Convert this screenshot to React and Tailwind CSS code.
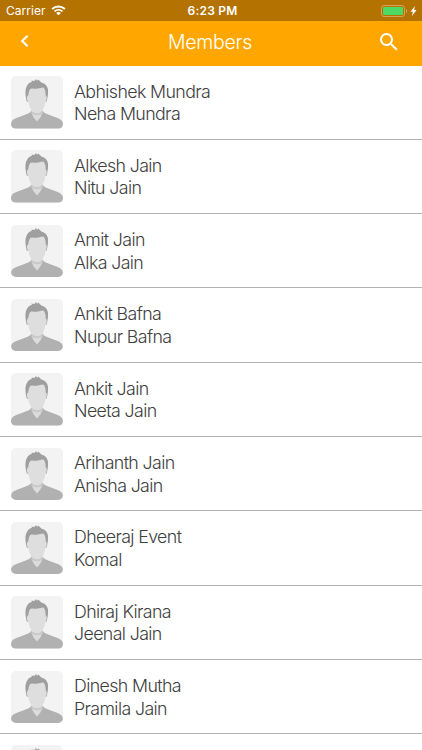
import { MdSearch } from "react-icons/md";

const members = [
  { name: "Abhishek Mundra", spouse: "Neha Mundra" },
  { name: "Alkesh Jain", spouse: "Nitu Jain" },
  { name: "Amit Jain", spouse: "Alka Jain" },
  { name: "Ankit Bafna", spouse: "Nupur Bafna" },
  { name: "Ankit Jain", spouse: "Neeta Jain" },
  { name: "Arihanth Jain", spouse: "Anisha Jain" },
  { name: "Dheeraj Event", spouse: "Komal" },
  { name: "Dhiraj Kirana", spouse: "Jeenal Jain" },
  { name: "Dinesh Mutha", spouse: "Pramila Jain" },
  { name: "", spouse: "" },
];

const Avatar = () => (
  <svg
    viewBox="0 0 156 157"
    className="h-[52.5px] w-[52px] shrink-0 rounded-[5px] bg-[#f3f3f3]"
  >
    <path
      d="M0 157V143C1 134 7 129 16 126L44 115C52 112 58 109 62 103H94C98 109 104 112 112 115L140 126C149 130 155 135 156 143V157Z"
      fill="#b1b1b1"
    />
    <path d="M62 94H94V112L88 124L78 136L68 124L62 112Z" fill="#dcdcdc" />
    <path d="M62 104C68 114 88 114 94 104V112C88 119 68 119 62 112Z" fill="#cacaca" />
    <path
      d="M47 76C43 58 42 46 45 36C48 25 55 19 63 17L61 13L70 15L75 9L78 14L82 10L91 19C103 22 109 29 111 40C112 52 110 64 107 76Z"
      fill="#9f9f9f"
    />
    <path
      d="M53 51C54 42 58 36 64 37C76 41 86 34 97 34C103 39 104 48 104 58C109 60 108 73 103 76C102 96 92 110 78 110C64 110 54 96 52 76C47 73 46 60 51 59Z"
      fill="#dedede"
    />
  </svg>
);

const StatusBar = () => (
  <div className="flex h-[21px] items-center bg-[#b47200] pr-[5px] pl-[6px] text-white">
    <div className="flex flex-1 items-center gap-[5px] text-[12px] tracking-[0.05px]">
      Carrier
      <svg viewBox="0 0 16 12" className="h-[11px] w-[15px]" fill="none" stroke="currentColor">
        <path d="M1 4.3C5 0.8 11 0.8 15 4.3" strokeWidth="2.1" />
        <path d="M3.6 7C6.1 4.7 9.9 4.7 12.4 7" strokeWidth="2" />
        <path d="M5.4 8.7Q8 6.5 10.6 8.7L8 11.3Z" fill="currentColor" stroke="none" />
      </svg>
    </div>
    <div className="pl-[2px] text-[12px] font-semibold tracking-[0.2px]">6:23 PM</div>
    <div className="flex flex-1 items-center justify-end">
      <div className="h-[12px] w-[24px] rounded-[3px] border border-[#d4a45c] p-[1px]">
        <div className="h-full rounded-[1px] bg-[#4cd964]" />
      </div>
      <div className="ml-[1px] h-[4px] w-[1px] rounded-r bg-[#d4a45c]" />
      <svg viewBox="0 0 6 10" className="ml-[3px] h-[10px] w-[7px]" fill="currentColor">
        <path d="M4.5 0L0 5.8H2.4L1.5 10L6 4.1H3.6Z" />
      </svg>
    </div>
  </div>
);

const Header = () => (
  <div className="flex h-[44.5px] items-center justify-between bg-[#ffa700] pr-[21px] pl-[20px] text-white">
    <svg
      viewBox="0 0 9 12"
      className="mb-[4px] h-[12px] w-[9px]"
      fill="none"
      stroke="currentColor"
      strokeWidth="2.1"
    >
      <path d="M7.6 0.8L2.2 6L7.6 11.2" />
    </svg>
    <h1 className="mb-[2px] ml-[14px] text-[19.5px] font-light tracking-[-0.25px]">Members</h1>
    <MdSearch className="mb-[2px] h-[24px] w-[24px]" />
  </div>
);

const MemberRow = ({ name, spouse }) => (
  <div className="flex h-[74.33px] shrink-0 items-start gap-[11px] border-b border-[#b3b3b3] pt-[10.5px] pl-[11px]">
    <Avatar />
    <div className="pt-[4.5px] text-[17.8px] leading-[22.5px] font-light tracking-[-0.62px] text-[#404040]">
      <p>{name}</p>
      <p>{spouse}</p>
    </div>
  </div>
);

const App = () => (
  <div className="flex h-screen flex-col overflow-hidden bg-white font-['Inter','Liberation_Sans',sans-serif]">
    <StatusBar />
    <Header />
    <div className="flex min-h-0 flex-1 flex-col overflow-hidden">
      {members.map((member, index) => (
        <MemberRow key={index} {...member} />
      ))}
    </div>
  </div>
);

export default App;
